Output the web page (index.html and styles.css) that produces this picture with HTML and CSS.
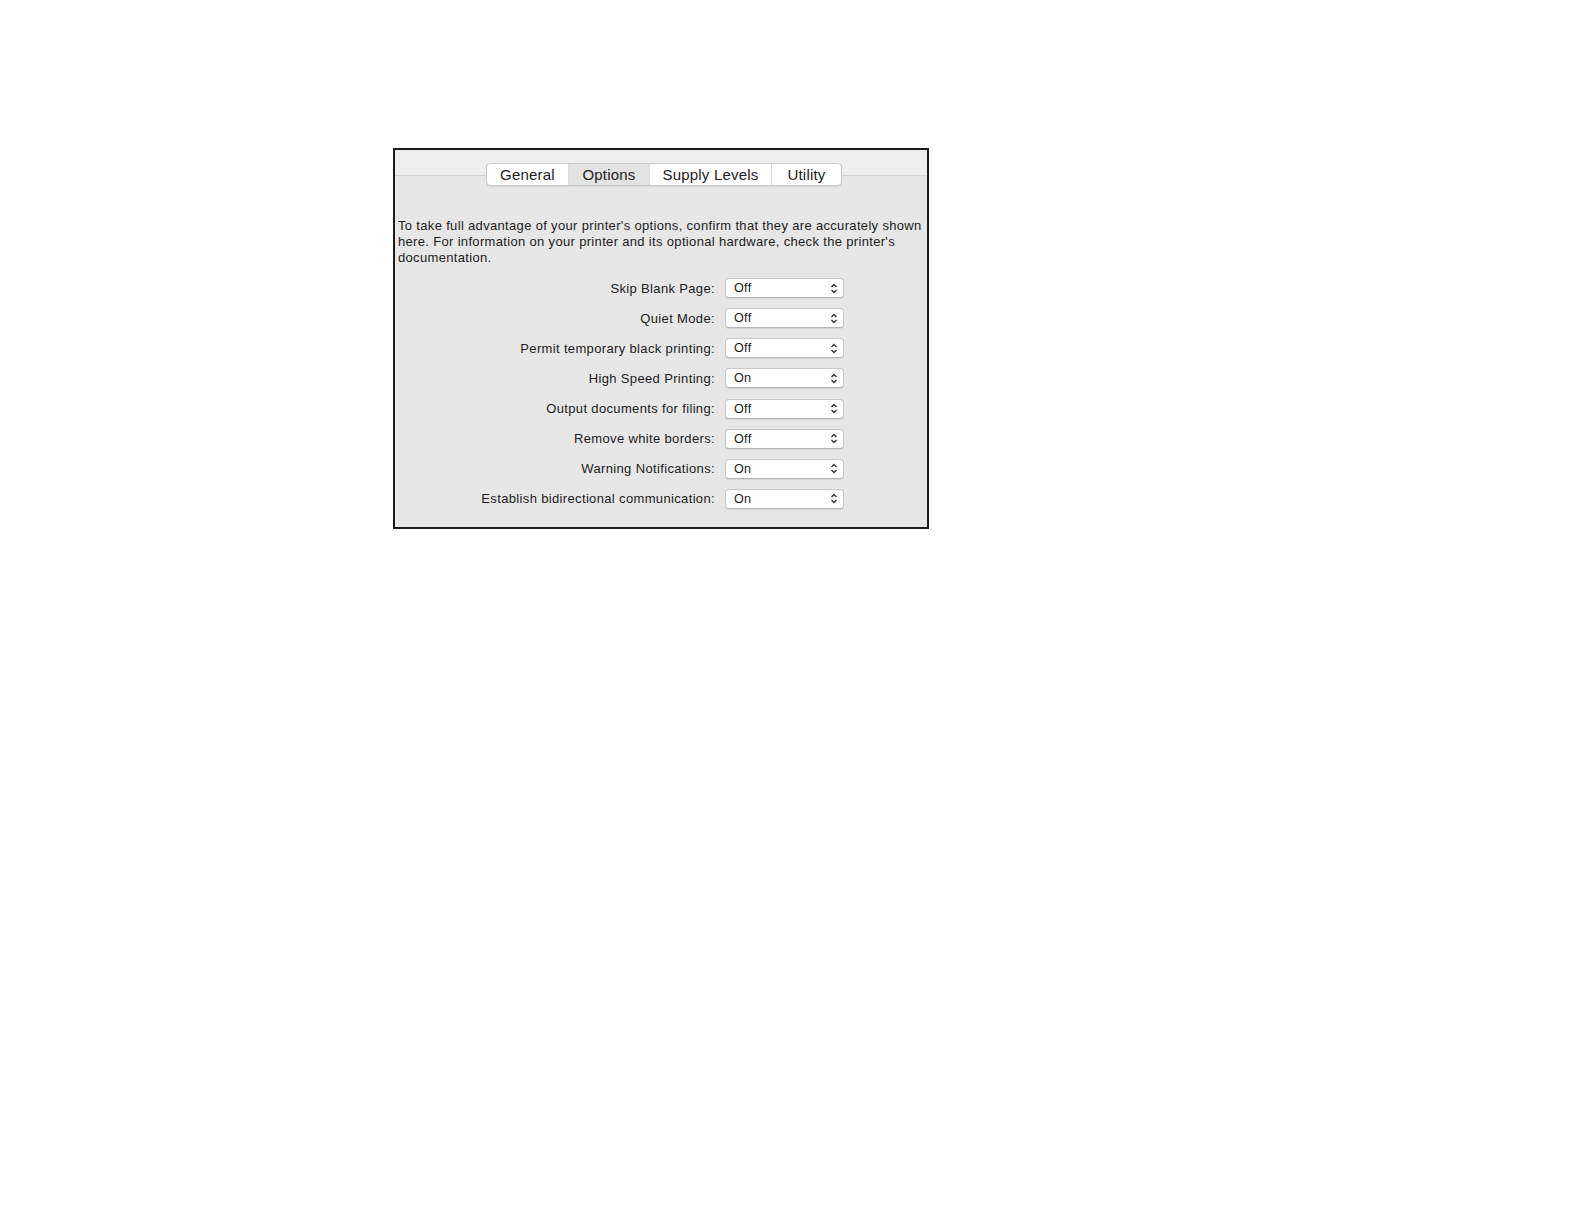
FILE: index.html
```html
<!DOCTYPE html>
<html>
<head>
<meta charset="utf-8">
<link rel="stylesheet" href="styles.css">
</head>
<body>
<div class="frame">
  <div class="band"></div>
  <div class="tabs-wrap">
    <div class="tabs">
      <div class="tab t-general">General</div>
      <div class="tab t-options selected">Options</div>
      <div class="tab t-supply">Supply Levels</div>
      <div class="tab t-utility">Utility</div>
    </div>
  </div>
  <p class="intro">To take full advantage of your printer's options, confirm that they are accurately shown here. For information on your printer and its optional hardware, check the printer's documentation.</p>
  <div class="rows">
    <div class="label">Skip Blank Page:</div><div class="popup"><span>Off</span><svg class="arr" viewBox="0 0 8 12"><path d="M1.5 4.5 L4 2 L6.5 4.5 M1.5 7.5 L4 10 L6.5 7.5"/></svg></div>
    <div class="label">Quiet Mode:</div><div class="popup"><span>Off</span><svg class="arr" viewBox="0 0 8 12"><path d="M1.5 4.5 L4 2 L6.5 4.5 M1.5 7.5 L4 10 L6.5 7.5"/></svg></div>
    <div class="label">Permit temporary black printing:</div><div class="popup"><span>Off</span><svg class="arr" viewBox="0 0 8 12"><path d="M1.5 4.5 L4 2 L6.5 4.5 M1.5 7.5 L4 10 L6.5 7.5"/></svg></div>
    <div class="label">High Speed Printing:</div><div class="popup"><span>On</span><svg class="arr" viewBox="0 0 8 12"><path d="M1.5 4.5 L4 2 L6.5 4.5 M1.5 7.5 L4 10 L6.5 7.5"/></svg></div>
    <div class="label">Output documents for filing:</div><div class="popup"><span>Off</span><svg class="arr" viewBox="0 0 8 12"><path d="M1.5 4.5 L4 2 L6.5 4.5 M1.5 7.5 L4 10 L6.5 7.5"/></svg></div>
    <div class="label">Remove white borders:</div><div class="popup"><span>Off</span><svg class="arr" viewBox="0 0 8 12"><path d="M1.5 4.5 L4 2 L6.5 4.5 M1.5 7.5 L4 10 L6.5 7.5"/></svg></div>
    <div class="label">Warning Notifications:</div><div class="popup"><span>On</span><svg class="arr" viewBox="0 0 8 12"><path d="M1.5 4.5 L4 2 L6.5 4.5 M1.5 7.5 L4 10 L6.5 7.5"/></svg></div>
    <div class="label">Establish bidirectional communication:</div><div class="popup"><span>On</span><svg class="arr" viewBox="0 0 8 12"><path d="M1.5 4.5 L4 2 L6.5 4.5 M1.5 7.5 L4 10 L6.5 7.5"/></svg></div>
  </div>
</div>
</body>
</html>
```

FILE: styles.css
```css
html, body {
  margin: 0;
  padding: 0;
  background: #ffffff;
}
body {
  font-family: "Liberation Sans", Arial, sans-serif;
  color: #1c1c1c;
}
.frame {
  margin-left: 393px;
  margin-top: 148px;
  width: 532px;
  height: 377px;
  border: 2px solid #1c1c1c;
  background: #e7e7e7;
}
.band {
  height: 25px;
  background: #eeeeee;
  border-bottom: 1px solid #d3d3d3;
}
.tabs-wrap {
  display: flex;
  justify-content: center;
  padding-left: 6px;
  margin-top: -13px;
}
.tabs {
  display: flex;
  height: 21px;
  background: #ffffff;
  border: 1px solid #c9c9c9;
  border-radius: 4px;
  box-shadow: 0 1px 0 rgba(0,0,0,0.06);
  overflow: hidden;
}
.tab {
  font-size: 15px;
  letter-spacing: 0.2px;
  line-height: 21px;
  text-align: center;
  color: #222;
  border-left: 1px solid #dcdcdc;
}
.tab:first-child { border-left: none; }
.t-general { width: 81px; }
.t-options { width: 80px; }
.t-supply { width: 121px; }
.t-utility { width: 69px; }
.tab.selected { background: #e3e3e3; }
.intro {
  margin: 32px 0 0 0;
  padding: 0 1px 0 3px;
  font-size: 13px;
  letter-spacing: 0.33px;
  line-height: 16px;
  color: #1c1c1c;
}
.rows {
  margin-top: 7px;
  display: grid;
  grid-template-columns: 320px 119px;
  grid-auto-rows: 30.14px;
  column-gap: 10px;
  align-items: center;
}
.label {
  text-align: right;
  font-size: 13px;
  letter-spacing: 0.35px;
  color: #1c1c1c;
}
.popup {
  height: 18px;
  background: #ffffff;
  border: 1px solid #c8c8c8;
  border-bottom-color: #b5b5b5;
  border-radius: 4px;
  box-shadow: 0 1px 1px rgba(0,0,0,0.08);
  display: flex;
  align-items: center;
  justify-content: space-between;
  padding: 0 5px 0 8px;
  font-size: 12.6px;
  letter-spacing: 0.3px;
  color: #1c1c1c;
}
.arr {
  width: 8px;
  height: 13px;
  fill: none;
  stroke: #333;
  stroke-width: 1.4;
}
```
